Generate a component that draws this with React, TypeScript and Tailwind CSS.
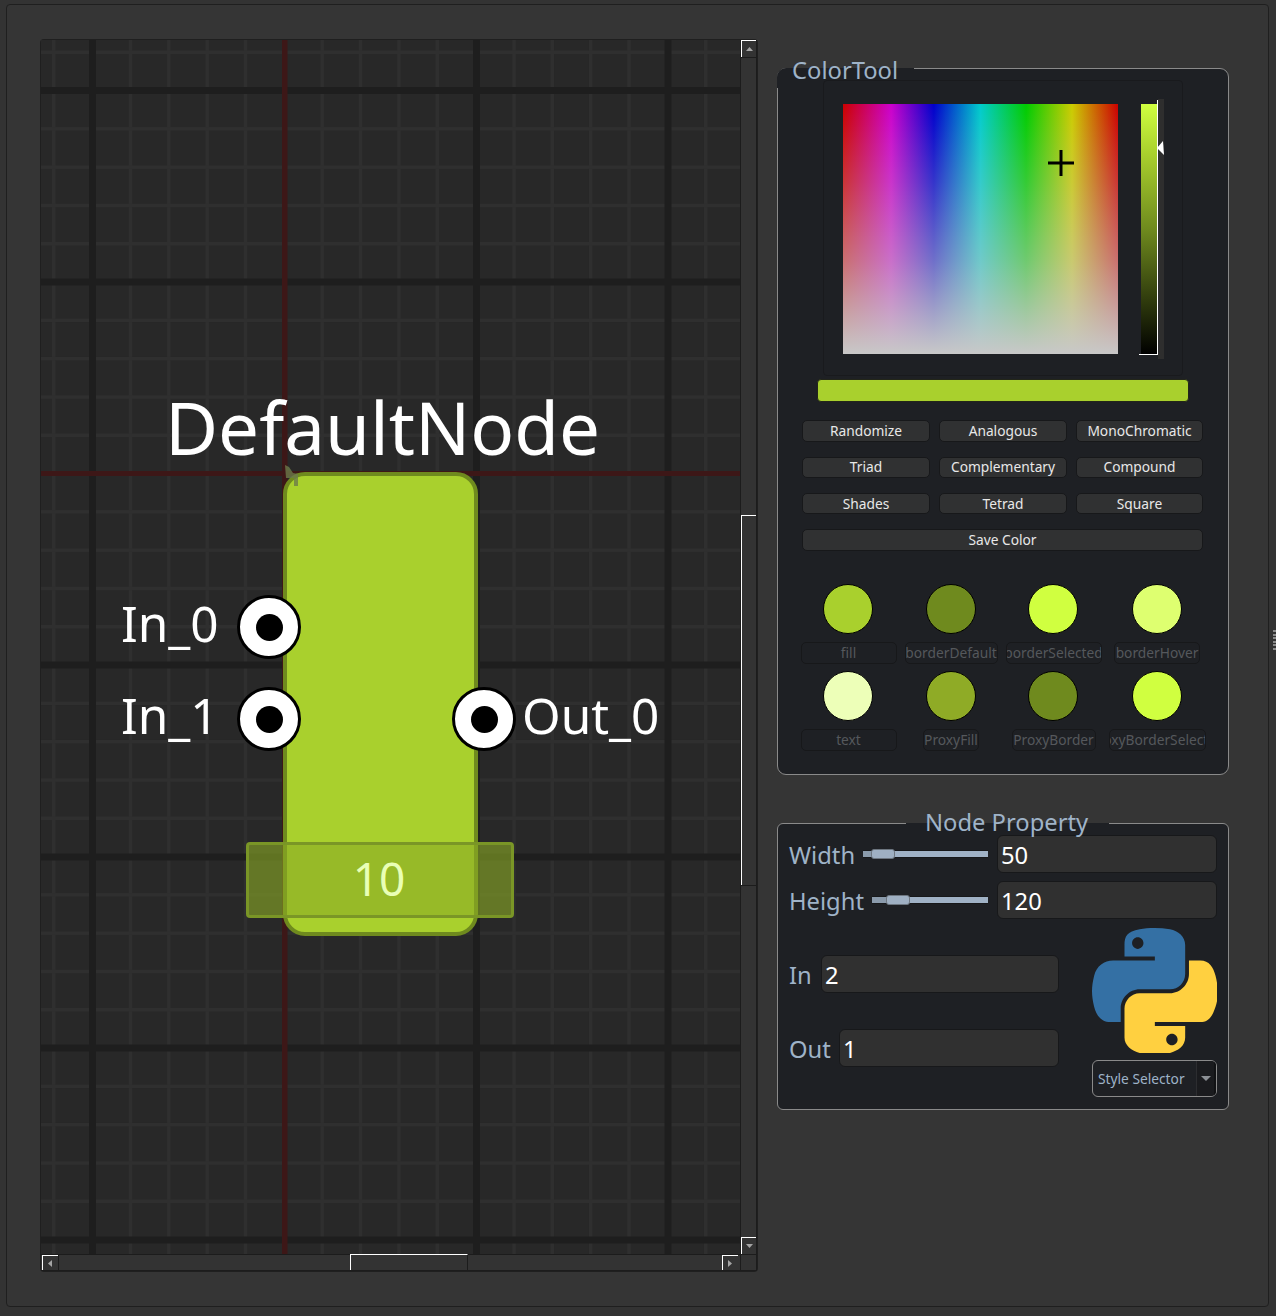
import React from "react";

const F = { fontFamily: '"Noto Sans", sans-serif' };
const minorX = Array.from({ length: 19 }, (_, i) => 12.5 + i * 38.35);
const minorY = Array.from({ length: 33 }, (_, i) => 12 + i * 38.3);
const majorX = [51.5, 435.5, 627];
const majorY = [50.5, 242, 625, 817, 1008, 1200];

function Grid() {
  return (
    <svg width="699" height="1214" className="block">
      <rect width="699" height="1214" fill="#282828" />
      {minorX.map((x) => <rect key={"a" + x} x={x - 1.5} y="0" width="3.5" height="1214" fill="#2f2f2f" />)}
      {minorY.map((y) => <rect key={"b" + y} x="0" y={y - 1.5} width="699" height="3.5" fill="#2f2f2f" />)}
      {majorX.map((x) => <rect key={"c" + x} x={x - 3.5} y="0" width="7" height="1214" fill="#1e1e1e" />)}
      {majorY.map((y) => <rect key={"d" + y} x="0" y={y - 3.5} width="699" height="7" fill="#1e1e1e" />)}
      <rect x="241" y="0" width="5.5" height="1214" fill="#3d1717" />
      <rect x="0" y="431" width="699" height="5" fill="#3d1717" />
    </svg>
  );
}

function Pin({ className }: { className: string }) {
  return (
    <div className={"absolute w-16 h-16 rounded-full bg-white border-[3.5px] border-black flex items-center justify-center " + className}>
      <div className="w-[27px] h-[27px] rounded-full bg-black" />
    </div>
  );
}

function Arrow({ dir }: { dir: "up" | "down" | "left" | "right" }) {
  const pts = { up: "1,6 8,6 4.5,2", down: "1,2 8,2 4.5,6", left: "6,1 6,8 2,4.5", right: "2,1 2,8 6,4.5" }[dir];
  return (
    <svg width="9" height="9" viewBox="0 0 9 9"><polygon points={pts} fill="#a5a5a5" /></svg>
  );
}

function ScrollBtn({ dir, className = "" }: { dir: "up" | "down" | "left" | "right"; className?: string }) {
  return (
    <div className={"flex items-center justify-center shrink-0 border-t border-l border-white " + className}>
      <Arrow dir={dir} />
    </div>
  );
}

function Btn({ children, className = "" }: { children: React.ReactNode; className?: string }) {
  return (
    <div className={"h-[21.5px] flex items-center justify-center rounded-[5px] bg-[#303132] border border-[#17181a] text-[13.75px] text-[#e8e8e8] leading-none " + className}>
      {children}
    </div>
  );
}

function Swatch({ color, label, labelW }: { color: string; label: string; labelW: string }) {
  return (
    <div className="flex flex-col items-center">
      <div className="w-[50px] h-[50px] mr-px rounded-full border border-black" style={{ backgroundColor: color }} />
      <div className={"mt-2 h-[22px] flex items-center justify-center overflow-hidden whitespace-nowrap rounded-[5px] border border-[#17181a] text-[13.75px] text-[#55585c] leading-none " + labelW}>
        {label}
      </div>
    </div>
  );
}

function Field({ value, className = "" }: { value: string; className?: string }) {
  return (
    <div className={"h-[38px] flex items-center pl-[3px] pt-[4px] rounded-[6px] bg-[#303030] border border-[#17181a] text-[23.75px] text-white leading-none " + className}>
      {value}
    </div>
  );
}

function Slider({ width, left, handle }: { width: string; left: string; handle: string }) {
  return (
    <div className={"relative h-[8px] shrink-0 border-y border-[#17181a] bg-[#a0b2c6] " + width}>
      <div className={"absolute top-0 left-0 h-[6px] bg-[#8a9aab] " + left} />
      <div className={"absolute top-[-2px] h-[10px] w-[24px] rounded-[3px] bg-[#9fb0c3] border border-[#6d7680] " + handle} />
    </div>
  );
}

export default function App() {
  return (
    <div className="relative w-[1276px] h-[1316px] bg-[#333333] pt-[4px] pl-[6px] pr-[7px] pb-[9px] overflow-hidden" style={F}>
      <div className="h-full rounded-[4px] border border-[#1f1f1f] bg-[#353535] pl-[34px] pt-[35px] flex items-start">
        {/* Canvas with scroll bars */}
        <div className="w-[716px] h-[1231px] shrink-0 grid grid-cols-[699px_17px] grid-rows-[1214px_17px] rounded-[3px] shadow-[0_0_0_1px_#1f1f1f] bg-[#333333]">
          <div className="relative overflow-hidden">
            <Grid />
            <div className="absolute left-[124px] top-[342px] text-[72.75px] leading-[90px] text-white whitespace-nowrap">DefaultNode</div>
            {/* Node */}
            <div className="absolute left-[242px] top-[432px] w-[195px] h-[464px] rounded-[22px] bg-[#a9d02d] border-4 border-[#6f8a1e]" />
            <svg className="absolute left-[244px] top-[425px]" width="14" height="22" viewBox="0 0 14 22">
              <path d="M0 0L4 2L8 8L13 9L13 21L9 21L9 13L1 13Z" fill="#6d7a4a" opacity="0.8" />
            </svg>
            <Pin className="left-[196px] top-[555px]" />
            <Pin className="left-[196px] top-[647px]" />
            <Pin className="left-[411px] top-[647px]" />
            <div className="absolute left-[80px] top-[551px] text-[49.5px] leading-[64px] text-white">In_0</div>
            <div className="absolute left-[80px] top-[643px] text-[49.5px] leading-[64px] text-white">In_1</div>
            <div className="absolute left-[481px] top-[643px] text-[49.5px] leading-[64px] text-white">Out_0</div>
            <div className="absolute left-[205px] top-[802px] w-[268px] h-[76px] rounded-[4px] bg-[#8cab24]/60 border-[3.5px] border-[#7a9626] flex items-center justify-center pb-[4px] pr-[2px] text-[46px] leading-none text-[#e9ffb5]">10</div>
          </div>

          {/* vertical scroll */}
          <div className="flex flex-col h-full border-x border-[#1c1c1c] bg-[#333333]">
            <ScrollBtn dir="up" className="h-[17px] border-b-0" />
            <div className="h-px bg-[#1c1c1c]" />
            <div className="h-[457px]" />
            <div className="h-[370px] border-t border-l border-white border-b-[#1c1c1c] bg-[#333333]" />
            <div className="grow border-t border-[#1c1c1c]" />
            <ScrollBtn dir="down" className="h-[17px]" />
          </div>

          {/* horizontal scroll */}
          <div className="flex border-y border-[#1c1c1c] bg-[#333333] pl-px pr-[2px]">
            <ScrollBtn dir="left" className="w-[16px]" />
            <div className="w-[292px] border-l border-[#1c1c1c]" />
            <div className="w-[118px] border-t border-l border-r border-t-white border-l-white border-r-[#1c1c1c] -mt-px" />
            <div className="grow" />
            <ScrollBtn dir="right" className="w-[16px]" />
          </div>
          <div className="border border-[#1c1c1c] bg-[#333333]" />
        </div>

        {/* Right column */}
        <div className="ml-5 w-[452px] pt-[28px] text-[#9fb3c8]">
          {/* ColorTool */}
          <div className="relative h-[707px] rounded-[9px] border border-[#8a8a8a] bg-[#1e2024] pt-[11px]">
            <div className="absolute -left-px -top-px w-[137px] h-[20px] rounded-tl-[9px] bg-[#1e2024]" />

            <div className="relative mx-auto w-[360px] h-[296px] rounded-[4px] border border-[#191a1d]">
              <div className="absolute left-[19px] top-[23px] w-[275px] h-[250px] bg-[linear-gradient(to_bottom,rgba(200,200,200,0)_0%,rgba(200,200,200,0.25)_30%,rgba(200,200,200,0.55)_62%,rgba(200,200,200,1)_100%),linear-gradient(to_right,#cc0000,#cc00cc_17.5%,#0000cc_33%,#00cccc_50%,#00cc00_66.6%,#cccc00_83.3%,#cc0000)]" />
              <svg className="absolute left-[224px] top-[69px]" width="26" height="26" viewBox="0 0 26 26">
                <path d="M13 0V26M0 13H26" stroke="#000" strokeWidth="3" />
              </svg>
              <div className="absolute left-[317px] top-[23px] w-[16px] h-[250px] bg-[linear-gradient(to_bottom,#d0ff40,#a9d02d_20%,#6f8a1e_50%,#000000)]" />
              <div className="absolute left-[334px] top-[18px] w-[6px] h-[260px] bg-[#2e2e2e]" />
              <div className="absolute left-[333px] top-[19px] w-px h-[254px] bg-white" />
              <div className="absolute left-[315px] top-[273px] w-[19px] h-px bg-white" />
              <svg className="absolute left-[333px] top-[60px]" width="7" height="14" viewBox="0 0 7 14">
                <polygon points="0,7 6,0 7,14" fill="#fff" />
              </svg>
            </div>

            <div className="absolute left-[14px] top-[-15px] text-[23.75px] leading-[32px] whitespace-nowrap">ColorTool</div>

            <div className="mx-auto mt-[3px] w-[372px] h-[23px] rounded-[4px] bg-[#a9d02d] border border-[#232619]" />

            <div className="mt-[18.3px] mx-[24px] grid grid-cols-[128px_128px_127px] gap-x-[9px] gap-y-[14.8px]">
              {["Randomize", "Analogous", "MonoChromatic", "Triad", "Complementary", "Compound", "Shades", "Tetrad", "Square"].map((t) => (
                <Btn key={t}>{t}</Btn>
              ))}
              <Btn className="col-span-3">Save Color</Btn>
            </div>

            <div className="mt-[33.3px] ml-[19px] grid grid-cols-[103px_102px_103px_104px] gap-y-[7px]">
              <Swatch color="#a9d02d" label="fill" labelW="w-[96px]" />
              <Swatch color="#6f8a1e" label="borderDefault" labelW="w-[93px]" />
              <Swatch color="#d0ff40" label="borderSelected" labelW="w-[96px]" />
              <Swatch color="#deff70" label="borderHover" labelW="w-[86px]" />
              <Swatch color="#edffb8" label="text" labelW="w-[96px]" />
              <Swatch color="#8fab26" label="ProxyFill" labelW="w-[56px]" />
              <Swatch color="#6f8a1e" label="ProxyBorder" labelW="w-[84px]" />
              <Swatch color="#d0ff40" label="ProxyBorderSelected" labelW="w-[97px]" />
            </div>
          </div>

          {/* Node Property */}
          <div className="relative mt-[48px] h-[287px] rounded-[6px] border border-[#8a8a8a] bg-[#1e2024] pt-[11px] pl-[11px] pr-[11px]">
            <div className="absolute left-[128px] top-[-1px] w-[203px] h-[12px] bg-[#1e2024]" />
            <div className="absolute left-[147px] top-[-18px] text-[23.75px] leading-[32px] whitespace-nowrap">Node Property</div>

            <div className="flex items-center h-[38px]">
              <span className="text-[23.75px] leading-none w-[74px] shrink-0 pt-[4px]">Width</span>
              <Slider width="w-[125px]" left="w-[8px]" handle="left-[8px]" />
              <Field value="50" className="ml-[9px] w-[220px]" />
            </div>
            <div className="flex items-center h-[38px] mt-[8px]">
              <span className="text-[23.75px] leading-none w-[83px] shrink-0 pt-[4px]">Height</span>
              <Slider width="w-[116px]" left="w-[14px]" handle="left-[14px]" />
              <Field value="120" className="ml-[9px] w-[220px]" />
            </div>

            <div className="flex mt-[8px]">
              <div className="w-[270px] pt-[28px]">
                <div className="flex items-center">
                  <span className="text-[23.75px] leading-none w-[32px] shrink-0 pt-[4px]">In</span>
                  <Field value="2" className="w-[238px]" />
                </div>
                <div className="flex items-center mt-[36px]">
                  <span className="text-[23.75px] leading-none w-[50px] shrink-0 pt-[4px]">Out</span>
                  <Field value="1" className="w-[220px]" />
                </div>
              </div>
              <div className="ml-[33px] w-[125px] pt-px">
                <svg width="125" height="125" viewBox="0 0 110.4 110.4" className="block">
                  <path fill="#3470a4" d="M54.919 0.001c-4.584.022-8.961.413-12.813 1.095C30.76 3.099 28.7 7.295 28.7 15.032v10.219h26.813v3.406H18.638c-7.793 0-14.616 4.684-16.75 13.594-2.462 10.213-2.571 16.586 0 27.25 1.906 7.938 6.458 13.594 14.25 13.594h9.219v-12.25c0-8.85 7.657-16.656 16.75-16.656h26.781c7.455 0 13.406-6.138 13.406-13.625V15.032c0-7.266-6.13-12.725-13.406-13.937-4.606-.766-9.385-1.115-13.969-1.094zm-14.5 8.219c2.77 0 5.031 2.299 5.031 5.125 0 2.816-2.262 5.094-5.031 5.094-2.78 0-5.031-2.278-5.031-5.094 0-2.826 2.251-5.125 5.031-5.125z" />
                  <path fill="#ffd040" d="M85.638 28.657v11.906c0 9.231-7.826 17-16.75 17H42.106c-7.336 0-13.406 6.278-13.406 13.625v25.531c0 7.266 6.319 11.54 13.406 13.625 8.487 2.496 16.626 2.947 26.781 0 6.75-1.954 13.406-5.888 13.406-13.625V86.501H55.513v-3.406h40.188c7.793 0 10.696-5.436 13.406-13.594 2.799-8.399 2.68-16.476 0-27.25-1.926-7.757-5.604-13.594-13.406-13.594h-10.063zM70.575 93.313c2.78 0 5.031 2.278 5.031 5.094 0 2.826-2.251 5.125-5.031 5.125-2.77 0-5.031-2.299-5.031-5.125 0-2.816 2.261-5.094 5.031-5.094z" />
                </svg>
                <div className="mt-[7px] h-[37px] flex rounded-[6px] border border-[#8a8a8a] overflow-hidden">
                  <div className="w-[103px] flex items-center pl-[5px] text-[13.75px] leading-none whitespace-nowrap">Style Selector</div>
                  <div className="grow flex items-center justify-center bg-[#1a1b1e] border-l border-[#2c2d30] border-r-2 border-r-[#111214]">
                    <svg width="12" height="7" viewBox="0 0 12 7"><polygon points="1,1 11,1 6,6" fill="#8b8f94" /></svg>
                  </div>
                </div>
              </div>
            </div>
          </div>
        </div>
      </div>

      {/* splitter grip */}
      <div className="absolute right-0 top-[630px] w-[3px] flex flex-col gap-[1.5px]">
        {[0, 1, 2, 3, 4, 5].map((i) => <div key={i} className="h-[2px] bg-[#8a8a8a]" />)}
      </div>
    </div>
  );
}
